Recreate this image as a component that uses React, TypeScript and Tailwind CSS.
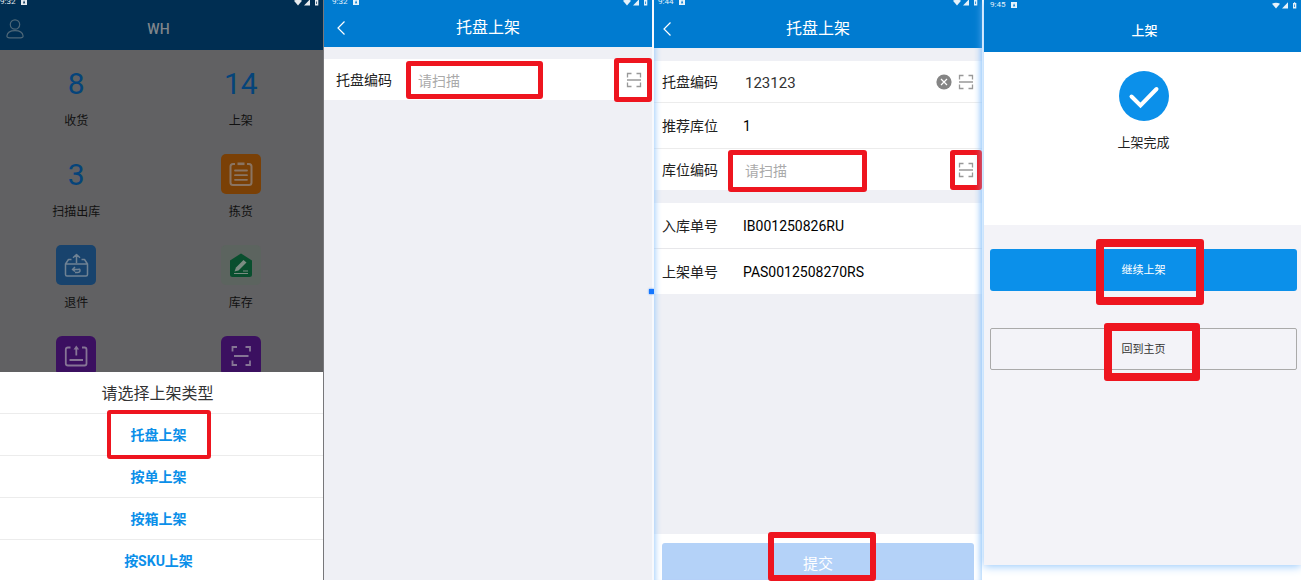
import React from "react";

const FONT = "font-[Roboto,'Noto_Sans_CJK_SC',sans-serif]";

function StatusBar({ time, className = "" }: { time: string; className?: string }) {
  return (
    <div className={`flex h-2.5 shrink-0 items-center justify-between pr-1 text-[8px] leading-none text-white/90 ${className}`}>
      <div className="flex items-center gap-1.5">
        <span>{time}</span>
        <svg viewBox="0 0 6 6" className="h-1.5 w-1.5" fill="currentColor" aria-hidden="true">
          <path fillRule="evenodd" d="M0 0H6V6H0ZM2 4.6H2.7L3 3.8 3.4 4.6H4.2L3.2 1.5H2.9Z" />
        </svg>
      </div>
      <svg viewBox="0 0 25 7" className="h-[7px] w-[25px]" fill="currentColor" aria-hidden="true">
        <path d="M0 1.8C2.4 0.3 5.6 0.3 8 1.8L4 6.4Z" />
        <path d="M16 0.3V6.4H10Z" />
        <path fillRule="evenodd" d="M21 1H22V0.3H23.2V1H24.3V6.6H21ZM22.3 2.4V5H23V2.4Z" />
      </svg>
    </div>
  );
}

function Highlight({ className }: { className: string }) {
  return <span aria-hidden="true" className={`pointer-events-none absolute z-10 rounded-[3px] border-[#ee151f] ${className}`} />;
}

function ScanIcon({ className = "h-4 w-4" }: { className?: string }) {
  return (
    <svg viewBox="0 0 16 16" className={className} fill="none" stroke="currentColor" strokeWidth="1.3" aria-hidden="true">
      <path d="M1.5 5.5V1.5H5.5M10.5 1.5H14.5V5.5M14.5 10.5V14.5H10.5M5.5 14.5H1.5V10.5M1 8H15" />
    </svg>
  );
}

function NavHeader({ time, title, className, inset }: { time: string; title: string; className: string; inset: string }) {
  return (
    <header className={`flex shrink-0 flex-col overflow-hidden bg-[#007bd0] text-white ${className}`}>
      <StatusBar time={time} className={`-mt-[3px] ${inset === "wide" ? "pl-2" : "pl-1"}`} />
      <div className="grid flex-1 grid-cols-[40px_1fr_40px] items-center pt-0.5">
        <button type="button" aria-label="返回" className={inset === "wide" ? "pl-3" : "pl-2"}>
          <svg viewBox="0 0 10 16" className="h-4 w-2.5" fill="none" stroke="currentColor" strokeWidth="1.2" aria-hidden="true">
            <path d="M8.5 1.5 2 8 8.5 14.5" />
          </svg>
        </button>
        <h1 className="text-center text-[16px] leading-5">{title}</h1>
      </div>
    </header>
  );
}

const tile = "h-10 w-10";

function PickIcon() {
  return (
    <svg viewBox="0 0 40 40" className={tile} fill="none" stroke="#8a7462" strokeWidth="2" aria-hidden="true">
      <rect width="40" height="40" rx="5" fill="#7a4006" stroke="none" />
      <path d="M14 10H12Q9.5 10 9.5 12.5V28.5Q9.5 31 12 31H28Q30.500 31 30.500 28.500V12.500Q30.500 10 28 10H26" />
      <path d="M16.500 9.800H23.500" strokeWidth="2.600" />
      <path d="M14 16.500H26M14 21.200H26M14 25.800H26" strokeLinecap="round" strokeWidth="1.800" />
    </svg>
  );
}

function ReturnIcon() {
  return (
    <svg viewBox="0 0 40 40" className={tile} fill="none" stroke="#6f8294" strokeWidth="1.500" strokeLinejoin="round" aria-hidden="true">
      <rect width="40" height="40" rx="5" fill="#18436d" stroke="none" />
      <path d="M15.500 14.500H12.500L9.500 19V29.500Q9.500 31 11 31H30Q31.500 31 31.500 29.500V19L28.500 14.500H25.500M9.500 19H31.500" />
      <path d="M20.500 18V10M17 12.800 20.500 9.500 24 12.800M19 22 16.500 24.500 19 26.500M17 24.500H22Q24 23.500 24 25.500 24 27.500 21.500 27.500H19" />
    </svg>
  );
}

function StockIcon() {
  return (
    <svg viewBox="0 0 40 40" className={tile} aria-hidden="true">
      <rect width="40" height="40" rx="5" fill="#5c645f" />
      <path d="M20 8.500 31 15.500V29.500Q31 32 28.500 32H11.500Q9 32 9 29.500V15.500Z" fill="#094f2e" />
      <path d="M13.500 26.500 15 22.500 22.500 15 25.500 17.500 17.500 25.500Z" fill="#7b8c82" />
      <path d="M13 28.500H27M22 26H27" stroke="#7b8c82" strokeWidth="1.200" />
    </svg>
  );
}

function UploadIcon() {
  return (
    <svg viewBox="0 0 40 40" className={tile} fill="none" stroke="#867595" strokeWidth="1.800" aria-hidden="true">
      <rect width="40" height="40" rx="6" fill="#3b1060" stroke="none" />
      <path d="M14.500 11.500H12Q9.800 11.500 9.800 13.500V27.500Q9.800 29.500 12 29.500H28.500Q30.500 29.500 30.500 27.500V13.500Q30.500 11.500 28.500 11.500H26M13.500 24H27M20.300 19.500V12" />
      <path d="M17.500 13.500 20.300 9.500 23.100 13.500Z" fill="#867595" stroke="none" />
    </svg>
  );
}

function ScanTile() {
  return (
    <svg viewBox="0 0 40 40" className={tile} fill="none" stroke="#867595" strokeWidth="1.800" aria-hidden="true">
      <rect width="40" height="40" rx="6" fill="#3b1060" stroke="none" />
      <path d="M11.500 15.500V11H16M24.500 11H29V15.500M29 24.500V29H24.500M16 29H11.500V24.500M13 20H27.500" />
    </svg>
  );
}

function TileCount({ value }: { value: number }) {
  return <span className="pt-0.5 text-[30px] leading-none text-[#05447a]">{value}</span>;
}

function MenuTile({ label, children }: { label?: string; children: React.ReactNode }) {
  return (
    <button type="button" className="flex h-[91px] flex-col items-center gap-2">
      <span className="flex h-10 items-center">{children}</span>
      {label && <span className="text-[12px] leading-5 whitespace-nowrap text-[#111]">{label}</span>}
    </button>
  );
}

function HomeScreen() {
  const options = ["托盘上架", "按单上架", "按箱上架", "按SKU上架"];
  return (
    <section className="flex min-h-0 min-w-0 flex-col overflow-hidden border-r border-[#77777a] bg-[#616163]">
      <header className="flex h-[50px] shrink-0 flex-col overflow-hidden bg-[#002e52]">
        <StatusBar time="9:32" className="-mt-[3px]" />
        <div className="grid flex-1 grid-cols-[32px_1fr_38px] items-center text-[#7f858b]">
          <button type="button" aria-label="我的" className="pl-1.5">
            <svg viewBox="0 0 18 20" className="h-5 w-[18px]" fill="none" stroke="#4d6778" strokeWidth="1.200" aria-hidden="true">
              <circle cx="9" cy="5.500" r="4.700" />
              <path d="M3.500 18.800Q0.800 18.800 0.900 17 1.500 11.700 9 11.700T17.100 17Q17.200 18.800 14.500 18.800Z" />
            </svg>
          </button>
          <h1 className="text-center text-[14px] leading-5 font-medium">WH</h1>
        </div>
      </header>
      <div className="grid min-h-0 flex-1 auto-rows-min grid-cols-2 gap-x-16 overflow-hidden pt-[13px] pr-8 pl-[26px]">
        <MenuTile label="收货"><TileCount value={8} /></MenuTile>
        <MenuTile label="上架"><TileCount value={14} /></MenuTile>
        <MenuTile label="扫描出库"><TileCount value={3} /></MenuTile>
        <MenuTile label="拣货"><PickIcon /></MenuTile>
        <MenuTile label="退件"><ReturnIcon /></MenuTile>
        <MenuTile label="库存"><StockIcon /></MenuTile>
        <MenuTile><UploadIcon /></MenuTile>
        <MenuTile><ScanTile /></MenuTile>
      </div>
      <div className="shrink-0 divide-y divide-[#ececec] bg-white text-center">
        <h2 className="h-[42px] pr-2 text-[16px] leading-[43px] text-[#333]">请选择上架类型</h2>
        {options.map((option, i) => (
          <div key={option} className="flex h-[42px] justify-center pr-1.5 last:h-10">
            <div className="relative">
              <button type="button" className="text-[14px] leading-[43px] font-bold text-[#0b8fe9]">{option}</button>
              {i === 0 && <Highlight className="-inset-x-6 -top-1 -bottom-1 border-4" />}
            </div>
          </div>
        ))}
      </div>
    </section>
  );
}

function ScanScreen() {
  return (
    <section className="flex min-h-0 min-w-0 flex-col border-r-2 border-[#f7f9fd] bg-[#eff0f5]">
      <NavHeader time="9:32" title="托盘上架" className="h-[47px]" inset="wide" />
      <div className="mt-3 flex h-[41px] items-center bg-white pr-2.5 pl-3">
        <label htmlFor="pallet" className="w-[70px] shrink-0 pt-0.5 text-[14px] text-[#222]">托盘编码</label>
        <div className="relative flex w-[137px] self-stretch">
          <input id="pallet" placeholder="请扫描" className="w-full bg-transparent pt-[3px] pl-3 text-[14px] text-[#333] outline-none placeholder:text-[#aaa]" />
          <Highlight className="inset-x-0 top-[2px] bottom-px border-5" />
        </div>
        <button type="button" aria-label="扫描" className="relative ml-auto text-[#999]">
          <ScanIcon />
          <Highlight className="-top-3.5 -right-2.5 -bottom-3.5 -left-3 border-5" />
        </button>
      </div>
    </section>
  );
}

function InfoRow({ label, value, className }: { label: string; value: string; className: string }) {
  return (
    <div className={`flex items-center px-2 pt-0.5 text-[14px] ${className}`}>
      <span className="w-[81px] shrink-0 text-[#222]">{label}</span>
      <span className="text-black">{value}</span>
    </div>
  );
}

function SubmitScreen() {
  return (
    <section className="relative flex min-h-0 min-w-0 flex-col bg-[#eff0f5]">
      <span aria-hidden="true" className="absolute top-[289px] -left-[5px] h-[5px] w-[5px] bg-[#1677ff] shadow-[0_0_2px_#1677ff]" />
      <NavHeader time="9:44" title="托盘上架" className="h-12" inset="narrow" />
      <div className="relative flex min-h-0 flex-1 flex-col">
        <div className="mt-[13px] divide-y divide-[#ececec] bg-white">
          <div className="flex h-[42px] items-center px-2">
            <label htmlFor="code" className="w-[83px] shrink-0 pt-0.5 text-[14px] text-[#222]">托盘编码</label>
            <input id="code" defaultValue="123123" className="min-w-0 flex-1 bg-transparent pt-[3px] text-[15px] text-[#333] outline-none" />
            <button type="button" aria-label="清除" className="mr-1.5">
              <svg viewBox="0 0 16 16" className="h-4 w-4" aria-hidden="true">
                <circle cx="8" cy="8" r="7.600" fill="#858585" />
                <path d="M5 5 11 11M11 5 5 11" stroke="white" strokeWidth="1.200" />
              </svg>
            </button>
            <button type="button" aria-label="扫描" className="text-[#999]"><ScanIcon /></button>
          </div>
          <InfoRow label="推荐库位" value="1" className="h-[46px]" />
          <div className="flex h-[41px] items-center px-2">
            <label htmlFor="location" className="w-[66px] shrink-0 pt-0.5 text-[14px] text-[#222]">库位编码</label>
            <div className="relative flex w-[139px] self-stretch">
              <input id="location" placeholder="请扫描" className="w-full bg-transparent pt-[3px] pl-[17px] text-[14px] text-[#333] outline-none placeholder:text-[#aaa]" />
              <Highlight className="inset-x-0 top-px -bottom-0.5 border-5" />
            </div>
            <button type="button" aria-label="扫描" className="relative ml-auto text-[#999]">
              <ScanIcon />
              <Highlight className="-inset-x-2 -inset-y-3 border-5" />
            </button>
          </div>
        </div>
        <div className="mt-[13px] divide-y divide-[#e7e7ea] bg-white">
          <InfoRow label="入库单号" value="IB001250826RU" className="h-[46px]" />
          <InfoRow label="上架单号" value="PAS0012508270RS" className="h-[45px]" />
        </div>
        <footer className="mt-auto flex shrink-0 bg-white px-2 pt-[9px]">
          <button type="button" className="relative h-[37px] flex-1 rounded-t-[3px] bg-[#b4d2f8] pt-0.5 text-[15px] leading-[38px] text-white">
            提交
            <Highlight className="-top-[11px] -bottom-px left-[34%] w-[108px] border-6" />
          </button>
        </footer>
        <div aria-hidden="true" className="pointer-events-none absolute inset-0 shadow-[inset_7px_0_6px_-6px_#9ccbfb,inset_-7px_0_6px_-6px_#9ccbfb]" />
      </div>
    </section>
  );
}

function DoneScreen() {
  return (
    <section className="z-10 mb-[15px] ml-[2px] flex min-h-0 min-w-0 flex-col bg-[#f3f3f8] shadow-[0_1px_9px_#8ec4fb] [clip-path:inset(-16px_0_-16px_-16px)]">
      <header className="flex h-[52px] shrink-0 flex-col bg-[#007bd0] text-white">
        <StatusBar time="9:45" className="pl-1.5" />
        <h1 className="pl-1 text-center text-[13px] leading-[42px] font-medium">上架</h1>
      </header>
      <div className="flex h-[173px] shrink-0 flex-col items-center gap-3 bg-white pt-[19px] pl-0.5">
        <svg viewBox="0 0 50 50" className="h-[50px] w-[50px]" aria-hidden="true">
          <circle cx="25" cy="25" r="25" fill="#0b90ea" />
          <path d="M12.500 25.500 21.500 34.500 37.500 18" fill="none" stroke="white" strokeWidth="4" strokeLinecap="round" />
        </svg>
        <p className="text-[13px] leading-5 text-[#222]">上架完成</p>
      </div>
      <div className="flex flex-col gap-[37px] pt-6 pr-1 pl-1.5 text-[11px]">
        <button type="button" className="relative h-[42px] rounded-[3px] bg-[#0b90ea] pt-0.5 text-white">
          继续上架
          <Highlight className="-top-2.5 -bottom-3.5 left-[34.500%] w-[108px] border-8" />
        </button>
        <button type="button" className="relative h-[42px] rounded-[2px] border border-[#aaa] pt-0.5 text-[#333]">
          回到主页
          <Highlight className="-top-1.5 -bottom-3 left-[37%] w-24 border-8" />
        </button>
      </div>
    </section>
  );
}

export default function App() {
  return (
    <main className={`grid h-screen grid-cols-[minmax(0,324fr)_minmax(0,330fr)_minmax(0,328fr)_minmax(0,319fr)] grid-rows-[minmax(0,1fr)] overflow-hidden bg-white pr-[7px] pb-[5px] ${FONT}`}>
      <HomeScreen />
      <ScanScreen />
      <SubmitScreen />
      <DoneScreen />
    </main>
  );
}
